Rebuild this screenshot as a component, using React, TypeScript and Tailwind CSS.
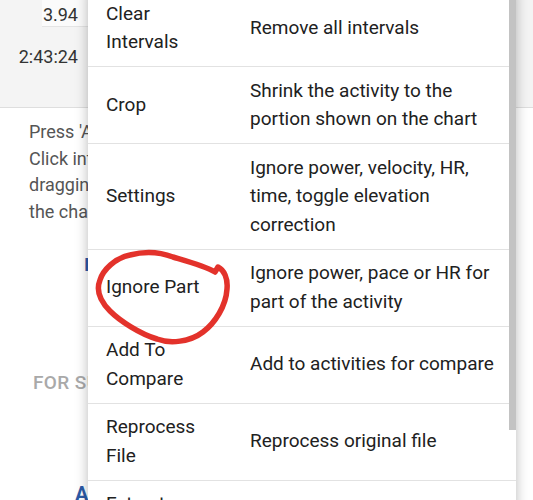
import React from 'react';

const rows = [
  { label: ['Clear', 'Intervals'], desc: ['Remove all intervals'] },
  { label: ['Crop'], desc: ['Shrink the activity to the', 'portion shown on the chart'] },
  { label: ['Settings'], desc: ['Ignore power, velocity, HR,', 'time, toggle elevation', 'correction'] },
  { label: ['Ignore Part'], desc: ['Ignore power, pace or HR for', 'part of the activity'] },
  { label: ['Add To', 'Compare'], desc: ['Add to activities for compare'] },
  { label: ['Reprocess', 'File'], desc: ['Reprocess original file'] },
  { label: ['Extract', 'Intervals'], desc: ['Save as new activities'] },
];

function Lines({ lines }: { lines: string[] }) {
  return (
    <>
      {lines.map((l, i) => (
        <div key={i} className="whitespace-nowrap">{l}</div>
      ))}
    </>
  );
}

export default function App() {
  return (
    <div className="relative w-[533px] h-[500px] overflow-hidden bg-white font-['Roboto',sans-serif]">
      {/* --- PAGE BEHIND THE MENU --- */}
      <div className="h-[108px] bg-[#f4f4f4] border-b border-[#dedede] flex flex-col items-start">
        <div className="w-[88px] flex flex-col items-end">
          <div className="w-[46px] h-[27px] bg-[#fbfbfb] border-b border-[#e4e4e4] text-right pr-[10px] text-[18px] leading-[27px] text-[#333] pt-[1px]">
            3.94
          </div>
          <div className="pr-[10px] mt-[16px] text-[18px] leading-[27px] text-[#333]">2:43:24</div>
        </div>
      </div>

      <div className="pl-[29px] pt-[11px] text-[18px] leading-[26.5px] text-[#555]">
        <div className="whitespace-nowrap">Press 'A' to add an interval.</div>
        <div className="whitespace-nowrap">Click into the chart and start</div>
        <div className="whitespace-nowrap">dragging to select a range of</div>
        <div className="whitespace-nowrap">the chart.</div>
      </div>

      <div className="pl-[84px] mt-[28px] text-[19px] leading-[24px] font-bold text-[#2c5aa6]">INTERVALS</div>

      <div className="pl-[33px] mt-[94px] text-[19px] leading-[24px] font-medium text-[#a9a9a9] tracking-[0.02em] whitespace-nowrap">
        FOR SUBSCRIBERS
      </div>

      <div className="pl-[75px] mt-[87px] text-[20px] leading-[24px] font-bold text-[#2c5aa6]">ACTIVITIES</div>

      {/* --- MENU OVERLAY --- */}
      <div className="absolute left-[88px] top-[-10px] w-[428px] bg-white shadow-[0_0_12px_rgba(0,0,0,0.28)]">
        {rows.map((r, i) => (
          <div key={i} className="flex border-b border-[#e2e2e2] py-[9.5px] text-[19px] leading-[28.5px] text-[#212121]">
            <div className="w-[162px] pl-[18px] flex flex-col justify-center">
              <Lines lines={r.label} />
            </div>
            <div className="flex-1 flex flex-col justify-center">
              <Lines lines={r.desc} />
            </div>
          </div>
        ))}
        <div className="absolute right-0 top-0 w-[7px] h-[440px] bg-[#c3c3c3]" />
      </div>

      {/* --- HAND-DRAWN RED CIRCLE --- */}
      <svg className="absolute left-0 top-0 pointer-events-none" width="533" height="500" viewBox="0 0 533 500">
        <path
          d="M 215 272 L 218 267 C 224 270 228 278 227 289 C 226 306 215 323 203 332 C 190 342 170 344 157 339 C 140 334 120 321 110 311 C 100 301 96 290 100 280 C 103 270 115 258 130 255 C 145 251 160 252 173 257 C 190 262 205 266 215 272"
          fill="none"
          stroke="#e3322b"
          strokeWidth="5.5"
          strokeLinecap="round"
          strokeLinejoin="round"
        />
      </svg>
    </div>
  );
}
